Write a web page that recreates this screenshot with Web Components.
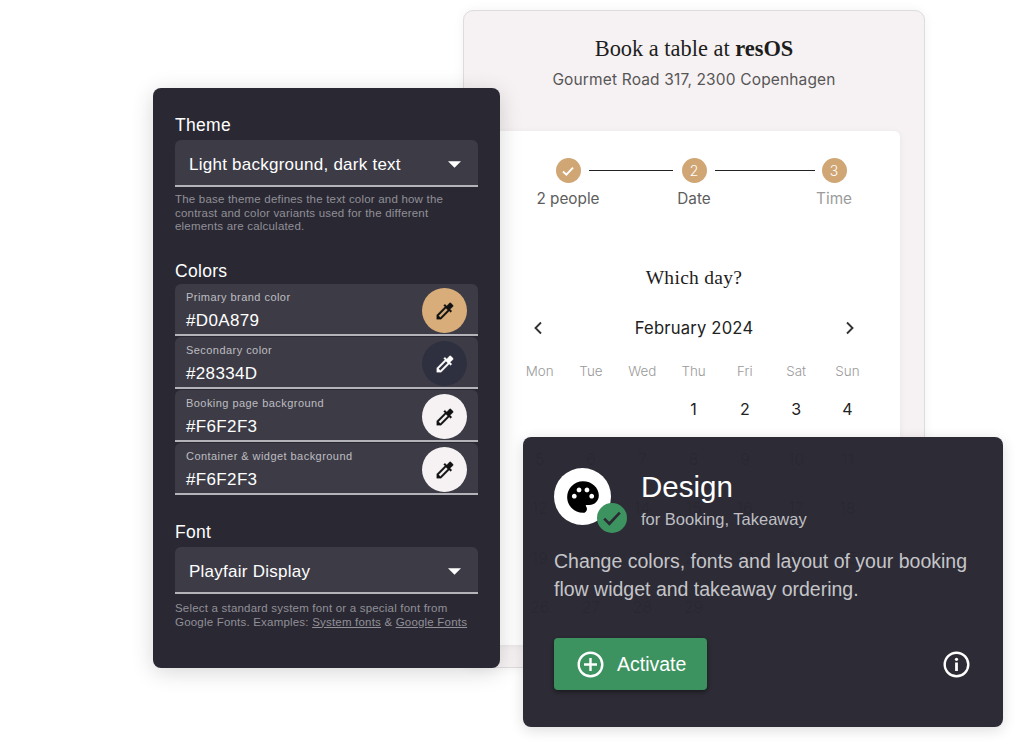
<!DOCTYPE html>
<html lang="en">
<head>
<meta charset="utf-8">
<title>resOS design</title>
<style>
  html, body { margin: 0; background: #fff; }
  body { width: 1023px; height: 747px; overflow: hidden; font-family: "Liberation Sans", Arial, sans-serif; }
</style>
</head>
<body>
<promo-stage>
  <booking-card slot="booking"></booking-card>

  <settings-panel slot="settings">
    <panel-section heading="Theme">
      <select-field value="Light background, dark text"></select-field>
      <span slot="help">The base theme defines the text color and how the contrast and color variants used for the different elements are calculated.</span>
    </panel-section>
    <panel-section heading="Colors" class="colors">
      <color-field label="Primary brand color" value="#D0A879" swatch="#d8ad79"></color-field>
      <color-field label="Secondary color" value="#28334D" swatch="#2e3040" inverted></color-field>
      <color-field label="Booking page background" value="#F6F2F3" swatch="#f6f2f3"></color-field>
      <color-field label="Container &amp; widget background" value="#F6F2F3" swatch="#f6f2f3"></color-field>
    </panel-section>
    <panel-section heading="Font">
      <select-field value="Playfair Display"></select-field>
      <span slot="help">Select a standard system font or a special font from Google Fonts. Examples: <u>System fonts</u> &amp; <u>Google Fonts</u></span>
    </panel-section>
  </settings-panel>

  <feature-card slot="feature"
    title-text="Design"
    subtitle="for Booking, Takeaway"
    description="Change colors, fonts and layout of your booking flow widget and takeaway ordering."></feature-card>
</promo-stage>

<script>
const DROPPER = 'M20.71 5.63l-2.34-2.34c-.39-.39-1.02-.39-1.41 0l-3.12 3.12-1.93-1.91-1.41 1.41 1.42 1.42L3 16.25V21h4.75l8.92-8.92 1.42 1.42 1.41-1.41-1.92-1.92 3.12-3.12c.4-.4.4-1.03.01-1.42zM6.92 19L5 17.08l8.06-8.06 1.92 1.92L6.92 19z';
const PALETTE = 'M12 2C6.49 2 2 6.49 2 12s4.49 10 10 10c1.38 0 2.5-1.12 2.5-2.5 0-.61-.23-1.2-.64-1.67-.08-.1-.13-.21-.13-.33 0-.28.22-.5.5-.5H16c3.31 0 6-2.69 6-6 0-4.96-4.49-9-10-9zm5.5 11c-.83 0-1.5-.67-1.5-1.5s.67-1.5 1.5-1.5 1.5.67 1.5 1.5-.67 1.5-1.5 1.5zm-3-4c-.83 0-1.5-.67-1.5-1.5S13.67 6 14.5 6s1.5.67 1.5 1.5S15.33 9 14.5 9zM5 11.5c0-.83.67-1.5 1.5-1.5s1.5.67 1.5 1.5S7.33 13 6.5 13 5 12.33 5 11.5zm6-4c0 .83-.67 1.5-1.5 1.5S8 8.33 8 7.5 8.67 6 9.5 6s1.5.67 1.5 1.5z';

class ShadowElement extends HTMLElement {
  constructor() {
    super();
    this.attachShadow({ mode: 'open' });
  }

  connectedCallback() {
    this.shadowRoot.innerHTML = `<style>${this.constructor.CSS}</style>${this.html()}`;
  }
}

// free canvas: three overlapping windows
class PromoStage extends ShadowElement {
  html() {
    return `
      <div class="win booking"><slot name="booking"></slot></div>
      <div class="win settings"><slot name="settings"></slot></div>
      <div class="win feature"><slot name="feature"></slot></div>
    `;
  }

  static get CSS() {
    return `
      :host { display: block; position: relative; width: 1023px; height: 747px; }
      .win { position: absolute; }
      .booking { left: 463px; top: 10px; width: 462px; height: 658px; }
      .settings { left: 153px; top: 88px; width: 347px; height: 580px; }
      .feature { left: 523px; top: 437px; width: 480px; height: 290px; }
    `;
  }
}

class BookingCard extends ShadowElement {
  html() {
    return `
      <header>
        <h1>Book a table at <b>resOS</b></h1>
        <p>Gourmet Road 317, 2300 Copenhagen</p>
      </header>
      <main>
        <booking-stepper></booking-stepper>
        <h2>Which day?</h2>
        <booking-calendar></booking-calendar>
      </main>
    `;
  }

  static get CSS() {
    return `
      :host {
        display: flex; flex-direction: column; box-sizing: border-box; height: 100%;
        background: #f6f2f3; border: 1px solid #dedcdd; border-radius: 10px;
        box-shadow: 0 0 12px rgba(0,0,0,.05);
        font-family: Inter, "Liberation Sans", sans-serif;
      }
      header { height: 120px; box-sizing: border-box; padding-top: 24px; text-align: center; }
      h1 { margin: 0; font: 400 22.4px/28px "Liberation Serif", serif; color: #1d1d1d; letter-spacing: 0; }
      p { margin: 5px 0 0; font-size: 15.5px; line-height: 24px; color: #565656; letter-spacing: .15px; }
      main {
        flex: none; height: 514px; margin: 0 24px 0 24px; box-sizing: border-box;
        background: #fff; border-radius: 6px; box-shadow: 0 1px 6px rgba(0,0,0,.06);
        padding-top: 27px;
      }
      h2 { margin: 50px 0 0; height: 28px; text-align: center; font: 400 19.5px/28px "Liberation Serif", serif; color: #1d1d1d; letter-spacing: .3px; }
    `;
  }
}

class BookingStepper extends ShadowElement {
  html() {
    return `
      <div class="step"><i><svg width="14" height="14" viewBox="0 0 14 14"><path d="M2 7.5l3.4 3.2L12 3.6" fill="none" stroke="#fff" stroke-width="2"/></svg></i><span>2 people</span></div>
      <div class="line first"></div>
      <div class="step"><i>2</i><span>Date</span></div>
      <div class="line last"></div>
      <div class="step off"><i>3</i><span>Time</span></div>
    `;
  }

  static get CSS() {
    return `
      :host { display: flex; padding: 0 34px 0 48px; height: 56px; }
      .step { flex: none; width: 64px; display: flex; flex-direction: column; align-items: center; gap: 4px; }
      i {
        width: 25px; height: 25px; border-radius: 50%; background: #d0a674; color: #fff;
        display: flex; align-items: center; justify-content: center;
        font-style: normal; font-size: 14px; font-weight: 300;
      }
      span { font-size: 15.3px; line-height: 24px; color: #5d5d5d; white-space: nowrap; }
      .off span { color: #9b9b9b; }
      .line { height: 1px; margin: 12px -11px 0; background: #222; }
      .line.first { flex: none; width: 84px; }
      .line.last { flex: 1; margin-right: -13px; }
    `;
  }
}

class BookingCalendar extends ShadowElement {
  html() {
    const heads = ['Mon', 'Tue', 'Wed', 'Thu', 'Fri', 'Sat', 'Sun'];
    const blanks = Array(3).fill('<span></span>').join('');
    const days = Array.from({ length: 29 }, (_, i) => `<span>${i + 1}</span>`).join('');
    const chevron = d => `<svg width="12" height="14" viewBox="0 0 12 14"><path d="${d}" fill="none" stroke="#333" stroke-width="1.9"/></svg>`;
    return `
      <div class="nav">
        ${chevron('M9 1.5L3.5 7 9 12.5')}
        <strong>February 2024</strong>
        ${chevron('M3 1.5L8.5 7 3 12.5')}
      </div>
      <div class="heads">${heads.map(h => `<span>${h}</span>`).join('')}</div>
      <div class="days">${blanks}${days}</div>
    `;
  }

  static get CSS() {
    return `
      :host { display: block; margin-top: 21px; padding: 0 26px; }
      .nav { display: flex; align-items: center; justify-content: space-between; height: 30px; padding: 0 18px 0 18px; }
      strong { font-weight: 400; font-size: 16.6px; color: #222; letter-spacing: .2px; }
      .heads, .days { display: grid; grid-template-columns: repeat(7, 51.3px); text-align: center; }
      .heads { margin-top: 16px; height: 24px; line-height: 24px; font-size: 13.4px; color: #9a9a9a; font-weight: 300; }
      .days { margin-top: 14px; grid-auto-rows: 49.5px; line-height: 24px; font-size: 16px; color: #222; }
    `;
  }
}

class SettingsPanel extends ShadowElement {
  html() {
    return '<slot></slot>';
  }

  static get CSS() {
    return `
      :host {
        display: block; box-sizing: border-box; height: 100%; padding: 26px 22px 0;
        background: #2a2933; border-radius: 8px; color: #fff;
        box-shadow: 0 4px 22px rgba(0,0,0,.16);
        font-family: "Liberation Sans", Arial, sans-serif;
      }
    `;
  }
}

class PanelSection extends ShadowElement {
  html() {
    return `
      <h3>${this.getAttribute('heading')}</h3>
      <div class="body"><slot></slot></div>
      <div class="help"><slot name="help"></slot></div>
    `;
  }

  static get CSS() {
    return `
      :host { display: block; margin-bottom: 26.5px; }
      :host(.colors) { margin-bottom: 26px; }
      :host(.colors) .help { display: none; }
      :host(.colors) h3 { height: 24px; }
      :host(:last-child) .help { margin-top: 8px; }
      h3 { margin: 0; font-size: 17.5px; font-weight: 400; line-height: 22px; height: 26px; letter-spacing: .3px; }
      .body { display: flex; flex-direction: column; gap: 1px; }
      .help { margin-top: 6px; font-size: 11.5px; line-height: 13.5px; color: #918f97; letter-spacing: .2px; }
    `;
  }
}

class SelectField extends ShadowElement {
  html() {
    return `
      <span>${this.getAttribute('value')}</span>
      <svg width="13" height="7" viewBox="0 0 14 7"><path d="M0 0h14L7 7z" fill="#fff"/></svg>
    `;
  }

  static get CSS() {
    return `
      :host {
        display: flex; align-items: center; justify-content: space-between; box-sizing: border-box;
        height: 47px; padding: 4px 17px 0 14px; background: #3d3c46;
        border-radius: 6px 6px 0 0; border-bottom: 2px solid #b4b3b9;
      }
      span { font-size: 17px; letter-spacing: .25px; color: #fff; }
    `;
  }
}

class ColorField extends ShadowElement {
  html() {
    const stroke = this.hasAttribute('inverted') ? '#fff' : '#111';
    return `
      <div class="text">
        <label>${this.getAttribute('label').replace('&', '&amp;')}</label>
        <span>${this.getAttribute('value')}</span>
      </div>
      <button type="button" style="background:${this.getAttribute('swatch')}">
        <svg width="22" height="22" viewBox="0 0 24 24"><path d="${DROPPER}" fill="${stroke}" stroke="${stroke}" stroke-width=".3"/></svg>
      </button>
    `;
  }

  static get CSS() {
    return `
      :host {
        display: flex; align-items: center; justify-content: space-between; box-sizing: border-box;
        height: 52px; padding: 0 11px; background: #3d3c46;
        border-radius: 6px 6px 0 0; border-bottom: 2px solid #b4b3b9;
      }
      .text { display: flex; flex-direction: column; padding-top: 3px; }
      label { font-size: 11px; line-height: 14px; color: #bdbcc1; letter-spacing: .45px; }
      span { font-size: 17px; line-height: 22px; margin-top: 6px; color: #fff; letter-spacing: .35px; }
      button {
        flex: none; width: 45px; height: 45px; padding: 0; border: 0; border-radius: 50%;
        display: flex; align-items: center; justify-content: center; margin-top: 3px;
      }
    `;
  }
}

class FeatureCard extends ShadowElement {
  html() {
    return `
      <div class="top">
        <div class="logo">
          <svg width="38" height="38" viewBox="0 0 24 24"><path d="${PALETTE}" fill="#000"/></svg>
          <span class="badge"><svg width="24" height="24" viewBox="0 0 20 20"><path d="M3.5 10.5l4.3 4.3L16.5 5.5" fill="none" stroke="#2b2a34" stroke-width="2.2"/></svg></span>
        </div>
        <div class="titles">
          <h2>${this.getAttribute('title-text')}</h2>
          <h4>${this.getAttribute('subtitle')}</h4>
        </div>
      </div>
      <p>${this.getAttribute('description')}</p>
      <div class="actions">
        <button type="button">
          <svg width="27" height="27" viewBox="0 0 27 27"><circle cx="13.5" cy="13.5" r="11.8" fill="none" stroke="#fff" stroke-width="2.4"/><path d="M13.5 7v13M7 13.5h13" stroke="#fff" stroke-width="2.4"/></svg>
          Activate
        </button>
        <svg width="27" height="27" viewBox="0 0 27 27"><circle cx="13.5" cy="13.5" r="11.8" fill="none" stroke="#fff" stroke-width="2.4"/><circle cx="13.5" cy="8.3" r="1.6" fill="#fff"/><path d="M13.5 11.5v8.5" stroke="#fff" stroke-width="2.8"/></svg>
      </div>
    `;
  }

  static get CSS() {
    return `
      :host {
        display: flex; flex-direction: column; box-sizing: border-box; height: 100%;
        padding: 31px 33px 0 31px; background: rgba(42,41,51,.985); border-radius: 8px; color: #fff;
        box-shadow: 0 3px 14px rgba(0,0,0,.14);
        font-family: "Liberation Sans", Arial, sans-serif;
      }
      .top { display: flex; gap: 30px; height: 64px; }
      .logo {
        position: relative; flex: none; width: 57px; height: 57px; border-radius: 50%; background: #fff;
        display: flex; align-items: center; justify-content: center;
      }
      .badge {
        position: absolute; left: 43px; top: 35px; width: 30px; height: 30px; border-radius: 50%;
        background: #3d9360; display: flex; align-items: center; justify-content: center;
      }
      .titles { padding-top: 1px; }
      h2 { margin: 0; font-size: 29.5px; font-weight: 400; line-height: 36px; }
      h4 { margin: 4px 0 0; font-size: 16.5px; font-weight: 400; line-height: 20px; color: #bfbfc3; }
      p { margin: 15px 0 0; font-size: 19.5px; line-height: 28px; color: #c5c5c9; }
      .actions { display: flex; align-items: center; justify-content: space-between; margin-top: 35px; }
      button {
        display: flex; align-items: center; gap: 13px; width: 153px; height: 52px; box-sizing: border-box;
        padding: 0 0 0 23px; border: 0; border-radius: 4px; background: #3d9360; color: #fff;
        font: 19.5px "Liberation Sans", Arial, sans-serif; box-shadow: 0 2px 4px rgba(0,0,0,.45);
      }
    `;
  }
}

customElements.define('promo-stage', PromoStage);
customElements.define('booking-card', BookingCard);
customElements.define('booking-stepper', BookingStepper);
customElements.define('booking-calendar', BookingCalendar);
customElements.define('settings-panel', SettingsPanel);
customElements.define('panel-section', PanelSection);
customElements.define('select-field', SelectField);
customElements.define('color-field', ColorField);
customElements.define('feature-card', FeatureCard);
</script>
</body>
</html>
